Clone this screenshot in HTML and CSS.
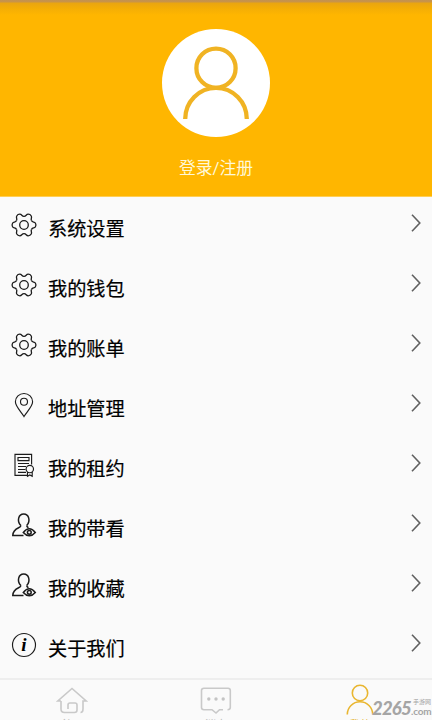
FILE: index.html
```
<!DOCTYPE html>
<html lang="zh-CN">
<head>
<meta charset="utf-8">
<title>我的</title>
<link rel="stylesheet" href="styles.css">
</head>
<body>
<svg class="defs" width="0" height="0">
  <defs>
    <path id="tooth" d="M12 3.3C14.4 3.3 14 1.2 16.2 1.2C17.4 1.2 18.65 1.93 19.25 2.97C20.35 4.87 18.33 5.58 19.53 7.65"/>
    <symbol id="gear" viewBox="0 0 24 24">
      <use href="#tooth"/><use href="#tooth" transform="rotate(60 12 12)"/><use href="#tooth" transform="rotate(120 12 12)"/>
      <use href="#tooth" transform="rotate(180 12 12)"/><use href="#tooth" transform="rotate(240 12 12)"/><use href="#tooth" transform="rotate(300 12 12)"/>
      <circle cx="12" cy="12" r="4.3"/>
    </symbol>
    <symbol id="pin" viewBox="0 0 24 24">
      <path d="M12 23.5C9.4 19 3.4 13.5 3.4 8.8A8.6 8.3 0 0 1 20.6 8.8C20.6 13.5 14.6 19 12 23.5Z"/>
      <circle cx="12" cy="8.7" r="3.5"/>
    </symbol>
    <symbol id="lease" viewBox="0 0 24 24">
      <path d="M19.6 11.6V1.4H3V22.3H15M6 4.5H17V7.6H6ZM6 10.5H17M6 13.5H14M6 16.5H13.5M6 19.4H14"/>
      <circle cx="17.8" cy="16" r="3.7"/><path d="M15.5 19V23.3L17.8 22L20.2 23.3V19"/>
    </symbol>
    <symbol id="viewer" viewBox="0 0 24 24">
      <path d="M8.8 12.6C4.6 8 6.4 1 11.7 1S18.8 8 14.7 12.6M8.8 12.6C9.5 15.4 1.2 14 .8 22.4H11.5M14.7 12.6Q14.8 14 16.5 14.7"/>
      <path d="M11.3 19.4Q17.3 12.3 23.3 19.4Q17.3 26.2 11.3 19.4Z"/><circle cx="17.3" cy="19.3" r="1.9"/>
    </symbol>
    <symbol id="info" viewBox="0 0 24 24"><circle cx="12" cy="12" r="11.5"/></symbol>
    <symbol id="chevron" viewBox="0 0 10 18"><path d="M1 .8L8.8 9L1 17.2"/></symbol>
  </defs>
</svg>
<main class="screen">
  <header class="profile">
    <div class="avatar">
      <svg width="108" height="108" viewBox="0 0 108 108"><circle cx="54" cy="39.2" r="19.6"/><path d="M23.2 90A30.8 31.2 0 0 1 84.8 90"/></svg>
    </div>
    <div class="login">登录/注册</div>
  </header>
  <nav class="menu">
    <div class="row"><svg class="icon"><use href="#gear"/></svg><span class="label">系统设置</span><svg class="arrow"><use href="#chevron"/></svg></div>
    <div class="row"><svg class="icon"><use href="#gear"/></svg><span class="label">我的钱包</span><svg class="arrow"><use href="#chevron"/></svg></div>
    <div class="row"><svg class="icon"><use href="#gear"/></svg><span class="label">我的账单</span><svg class="arrow"><use href="#chevron"/></svg></div>
    <div class="row"><svg class="icon fine"><use href="#pin"/></svg><span class="label">地址管理</span><svg class="arrow"><use href="#chevron"/></svg></div>
    <div class="row"><svg class="icon fine"><use href="#lease"/></svg><span class="label">我的租约</span><svg class="arrow"><use href="#chevron"/></svg></div>
    <div class="row"><svg class="icon bold"><use href="#viewer"/></svg><span class="label">我的带看</span><svg class="arrow"><use href="#chevron"/></svg></div>
    <div class="row"><svg class="icon bold"><use href="#viewer"/></svg><span class="label">我的收藏</span><svg class="arrow"><use href="#chevron"/></svg></div>
    <div class="row"><span class="about"><svg class="icon fine"><use href="#info"/></svg><span class="about-i">i</span></span><span class="label">关于我们</span><svg class="arrow"><use href="#chevron"/></svg></div>
  </nav>
  <footer class="tabs">
    <div class="tab"><svg width="32" height="28" viewBox="0 0 32 28"><path d="M5 14H1.8L16 1.5L30.2 14H27V22Q27 25.5 24.5 25.5M5 14V22Q5 25.5 8.5 25.5H18.5Q21 25.5 21 23V18Q21 16 19 16H14Q12 16 12 18V22"/></svg><span>首页</span></div>
    <div class="tab"><svg width="32" height="28" viewBox="0 0 32 28"><path d="M23 22.7H19.5L16 26L12 22.7H4Q1.5 22.7 1.5 20.5V3.5Q1.5 1.2 4 1.2H28Q30.3 1.2 30.3 3.5V20.5Q30.3 22.7 27.5 22.7"/><g class="dots"><circle cx="8.8" cy="12" r="1.7"/><circle cx="16" cy="12" r="1.7"/><circle cx="23.2" cy="12" r="1.7"/></g></svg><span>消息</span></div>
    <div class="tab active"><svg width="32" height="32" viewBox="0 0 32 32"><circle cx="16" cy="9" r="7.7"/><path d="M3.3 30.5A12.7 12.7 0 0 1 28.7 30.5"/></svg><span>我的</span></div>
  </footer>
  <div class="watermark"><span class="digits">2265</span><span class="site"><span class="cn">手游网</span><span class="com">.com</span></span></div>
</main>
</body>
</html>
```
FILE: styles.css
```
* { box-sizing: border-box; }
body { margin: 0; background: #fafafa; font-family: Roboto, "Noto Sans CJK SC", sans-serif; }
.defs { position: absolute; }
svg { display: block; fill: none; }
symbol { overflow: visible; }
.screen { position: relative; width: 432px; height: 720px; overflow: hidden; display: flex; flex-direction: column; }
.profile {
  height: 197px; flex: none; padding-top: 29px; display: flex; flex-direction: column; align-items: center;
  background: linear-gradient(#c3924f 0, #c99448 2px, #e9a511 3px, #f3ad06 8px, #ffb600 15px);
  border-bottom: 1px solid #ffce55;
}
.avatar { width: 108px; height: 108px; border-radius: 50%; background: #fff; }
.avatar svg { stroke: #f0b323; stroke-width: 4.3; }
.login { margin-top: 19px; font-size: 16.8px; line-height: 24px; color: #fff8d8; }
.menu { height: 481px; flex: none; }
.row { height: 60px; padding: 0 11px 0 12px; display: flex; align-items: flex-start; }
.icon { width: 24px; height: 24px; margin-top: 16px; stroke: #1c1c1c; stroke-width: 1.3; overflow: visible; }
.fine { stroke-width: 1.15; }
.bold { stroke-width: 1.5; }
.label { margin-left: 12px; padding-top: 17px; font-size: 19.2px; line-height: 28px; color: #000; -webkit-text-stroke: .2px #000; flex: 1; font-family: "Noto Sans CJK SC", sans-serif; }
.arrow { width: 10px; height: 18px; margin-top: 16.5px; stroke: #606060; stroke-width: 1.6; }
.about { display: grid; }
.about > * { grid-area: 1 / 1; }
.about-i { margin-top: 16px; width: 24px; text-align: center; font: italic bold 19px/24px "Liberation Serif", serif; }
.tabs { height: 42px; flex: none; border-top: 2px solid #eee; display: grid; grid-template-columns: repeat(3, 1fr); }
.tab { display: flex; flex-direction: column; align-items: center; padding-top: 7px; font-size: 11px; line-height: 14px; color: #bbb; }
.tab svg { flex: none; stroke: #c9c9c9; stroke-width: 1.6; }
.tab span { margin-top: 4px; }
.tab .dots { fill: #c4c4c4; stroke: none; }
.active { padding-top: 4px; color: #e5b842; }
.tab.active svg { stroke: #e9b630; }
.tab.active span { margin-top: 3px; }
.watermark { position: absolute; left: 372px; top: 698px; display: flex; color: #a5a5a5; font-family: Lato, "Noto Sans CJK SC", sans-serif; }
.digits { width: 39px; font-size: 18.5px; line-height: 20px; font-weight: 900; font-style: italic; letter-spacing: -.8px; }
.site { display: flex; flex-direction: column; font-weight: 700; }
.cn { margin-left: 2px; font-size: 6px; line-height: 8px; font-family: "Noto Sans CJK SC", sans-serif; font-weight: 400; }
.com { font-size: 10px; line-height: 11px; letter-spacing: -.2px; }
```
